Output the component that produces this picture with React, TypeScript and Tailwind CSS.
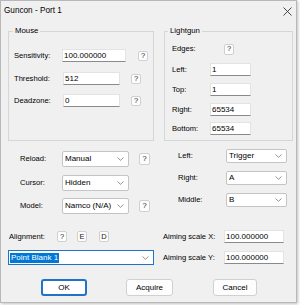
import React from "react";

const Chevron = () => (
  <svg width="7" height="4" viewBox="0 0 7 4" className="shrink-0">
    <path d="M0.5 0.5 L3.5 3.3 L6.5 0.5" fill="none" stroke="#7a7a7a" strokeWidth="0.8" />
  </svg>
);

const Q = ({ t = "?", w = "w-[10px]", h = "h-[11px]", cls = "" }: { t?: string; w?: string; h?: string; cls?: string }) => (
  <div className={`${w} ${h} ${cls} shrink-0 bg-[#fdfdfd] border border-[#d0d0d0] rounded-[2px] flex items-center justify-center text-[7.5px] leading-none text-[#1a1a1a]`}>
    {t}
  </div>
);

const Input = ({ v, cls }: { v: string; cls: string }) => (
  <div className={`${cls} shrink-0 bg-white border border-[#e3e3e3] border-b-[#8a8a8a] flex items-center pl-[1px] text-[8px] leading-none text-black`}>
    {v}
  </div>
);

const Select = ({ v, cls }: { v: string; cls: string }) => (
  <div className={`${cls} shrink-0 bg-white border border-[#c4c4c4] rounded-[2px] flex items-center justify-between pl-[2px] pr-[4px] text-[8px] leading-none text-black`}>
    <span>{v}</span>
    <Chevron />
  </div>
);

const Btn = ({ t, cls, def = false }: { t: string; cls: string; def?: boolean }) => (
  <div
    className={`${cls} h-[17px] shrink-0 rounded-[3px] flex items-center justify-center text-[8px] leading-none text-black ${
      def ? "bg-white border-2 border-[#1f74c8]" : "bg-[#fdfdfd] border border-[#d0d0d0]"
    }`}
  >
    {t}
  </div>
);

export default function App() {
  return (
    <div className="w-[300px] h-[305px] bg-white" style={{ fontFamily: '"Liberation Sans", Arial, sans-serif' }}>
      <div className="w-[297px] h-[303px] bg-[#f0f0f0] border border-[#b8b8b8] shadow-[1px_1px_3px_rgba(0,0,0,0.25)] flex flex-col text-black">
        {/* Title bar */}
        <div className="h-[20px] flex items-center justify-between pl-[3px] pr-[3px] shrink-0">
          <span className="text-[8.2px] leading-none">Guncon - Port 1</span>
          <svg width="9" height="9" viewBox="0 0 9 9" className="mr-[1px]">
            <path d="M0.5 0.5 L8.5 8.5 M8.5 0.5 L0.5 8.5" stroke="#333" strokeWidth="0.9" />
          </svg>
        </div>

        <div className="pl-[7px] flex flex-col">
          {/* Groups */}
          <div className="flex mt-[5px]">
            <fieldset className="w-[146px] h-[115px] border border-[#d6d6d6] flex flex-col">
              <legend className="ml-[4px] px-[2px] text-[7.8px] leading-[10px]">Mouse</legend>
              <div className="flex items-center h-[13px] mt-[13px] pl-[5px]">
                <span className="w-[48px] text-[7.6px] leading-none">Sensitivity:</span>
                <Input v="100.000000" cls="w-[64px] h-[13px]" />
                <Q cls="ml-[12px]" h="h-[10px]" />
              </div>
              <div className="flex items-center h-[13px] mt-[10px] pl-[5px]">
                <span className="w-[49px] text-[7.6px] leading-none">Threshold:</span>
                <Input v="512" cls="w-[57px] h-[13px]" />
                <Q cls="ml-[11px]" h="h-[10px]" />
              </div>
              <div className="flex items-center h-[13px] mt-[9px] pl-[5px]">
                <span className="w-[49px] text-[7.6px] leading-none">Deadzone:</span>
                <Input v="0" cls="w-[57px] h-[13px]" />
                <Q cls="ml-[11px]" h="h-[10px]" />
              </div>
            </fieldset>

            <fieldset className="ml-[10px] w-[129px] h-[115px] border border-[#d6d6d6] flex flex-col">
              <legend className="ml-[3px] px-[2px] text-[7.8px] leading-[10px]">Lightgun</legend>
              <div className="flex items-center h-[12px] mt-[7px] pl-[7px]">
                <span className="w-[52px] text-[7.6px] leading-none">Edges:</span>
                <Q />
              </div>
              <div className="flex items-center h-[13px] mt-[8px] pl-[7px]">
                <span className="w-[38px] text-[7.6px] leading-none">Left:</span>
                <Input v="1" cls="w-[41px] h-[13px]" />
              </div>
              <div className="flex items-center h-[13px] mt-[7px] pl-[7px]">
                <span className="w-[38px] text-[7.6px] leading-none">Top:</span>
                <Input v="1" cls="w-[41px] h-[13px]" />
              </div>
              <div className="flex items-center h-[13px] mt-[7px] pl-[7px]">
                <span className="w-[38px] text-[7.6px] leading-none">Right:</span>
                <Input v="65534" cls="w-[41px] h-[13px]" />
              </div>
              <div className="flex items-center h-[13px] mt-[6px] pl-[7px]">
                <span className="w-[38px] text-[7.6px] leading-none">Bottom:</span>
                <Input v="65534" cls="w-[41px] h-[13px]" />
              </div>
            </fieldset>
          </div>

          {/* Selects */}
          <div className="flex">
            <div className="flex flex-col mt-[10px] pl-[12px]">
              <div className="flex items-center h-[16px]">
                <span className="w-[42px] text-[7.6px] leading-none">Reload:</span>
                <Select v="Manual" cls="w-[67px] h-[16px]" />
                <Q cls="ml-[10px]" w="w-[11px]" h="h-[12px]" />
              </div>
              <div className="flex items-center h-[16px] mt-[8px]">
                <span className="w-[42px] text-[7.6px] leading-none">Cursor:</span>
                <Select v="Hidden" cls="w-[67px] h-[16px]" />
              </div>
              <div className="flex items-center h-[16px] mt-[7px]">
                <span className="w-[42px] text-[7.6px] leading-none">Model:</span>
                <Select v="Namco (N/A)" cls="w-[67px] h-[16px]" />
                <Q cls="ml-[10px]" w="w-[11px]" h="h-[12px]" />
              </div>
            </div>
            <div className="flex flex-col mt-[8px] ml-[28px]">
              <div className="flex items-center h-[14px]">
                <span className="w-[48px] text-[7.6px] leading-none">Left:</span>
                <Select v="Trigger" cls="w-[61px] h-[14px]" />
              </div>
              <div className="flex items-center h-[14px] mt-[8px]">
                <span className="w-[48px] text-[7.6px] leading-none">Right:</span>
                <Select v="A" cls="w-[61px] h-[14px]" />
              </div>
              <div className="flex items-center h-[14px] mt-[8px]">
                <span className="w-[48px] text-[7.6px] leading-none">Middle:</span>
                <Select v="B" cls="w-[61px] h-[14px]" />
              </div>
            </div>
          </div>

          {/* Alignment / aiming */}
          <div className="flex mt-[16px]">
            <div className="flex flex-col w-[146px]">
              <div className="flex items-center h-[13px] pl-[1px]">
                <span className="w-[48px] text-[7.6px] leading-none">Alignment:</span>
                <Q />
                <Q t="E" cls="ml-[10px]" />
                <Q t="D" cls="ml-[12px]" />
              </div>
              <div className="mt-[7px] w-[146px] h-[15px] bg-white border border-[#1f74c8] flex items-center justify-between pl-[1px] pr-[4px]">
                <span className="bg-[#0078d7] text-white text-[8px] leading-[10px] px-[1px]">Point Blank 1</span>
                <Chevron />
              </div>
            </div>
            <div className="flex flex-col ml-[9px]">
              <div className="flex items-center h-[13px]">
                <span className="w-[61px] text-[7.6px] leading-none">Aiming scale X:</span>
                <Input v="100.000000" cls="w-[60px] h-[13px]" />
              </div>
              <div className="flex items-center h-[13px] mt-[8px]">
                <span className="w-[61px] text-[7.6px] leading-none">Aiming scale Y:</span>
                <Input v="100.000000" cls="w-[60px] h-[13px]" />
              </div>
            </div>
          </div>

          {/* Buttons */}
          <div className="flex mt-[14px]">
            <Btn t="OK" cls="ml-[33px] w-[46px]" def />
            <Btn t="Acquire" cls="ml-[39px] w-[47px]" />
            <Btn t="Cancel" cls="ml-[40px] w-[44px]" />
          </div>
        </div>
      </div>
    </div>
  );
}
